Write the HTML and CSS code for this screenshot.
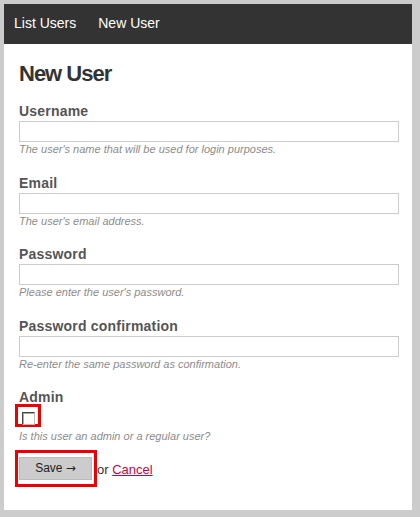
FILE: index.html
```html
<!DOCTYPE html>
<html>
<head>
<meta charset="utf-8">
<link rel="stylesheet" href="styles.css">
</head>
<body>
<div class="page">
  <nav class="nav">
    <a href="#">List Users</a>
    <a href="#">New User</a>
  </nav>
  <div class="content">
    <h2 class="title">New User</h2>
    <form class="form">
      <div class="field">
        <label class="label">Username</label>
        <input class="text" type="text">
        <span class="desc">The user's name that will be used for login purposes.</span>
      </div>
      <div class="field">
        <label class="label">Email</label>
        <input class="text" type="text">
        <span class="desc">The user's email address.</span>
      </div>
      <div class="field">
        <label class="label">Password</label>
        <input class="text" type="password">
        <span class="desc">Please enter the user's password.</span>
      </div>
      <div class="field">
        <label class="label">Password confirmation</label>
        <input class="text" type="password">
        <span class="desc">Re-enter the same password as confirmation.</span>
      </div>
      <div class="field">
        <label class="label">Admin</label>
        <div class="error-wrap check-wrap"><input class="check" type="checkbox"></div>
        <span class="desc">Is this user an admin or a regular user?</span>
      </div>
      <div class="actions">
        <div class="error-wrap btn-wrap"><button class="button" type="button">Save <span class="arrow">&rarr;</span></button></div>
        <span class="or">or <a class="cancel" href="#">Cancel</a></span>
      </div>
    </form>
  </div>
</div>
</body>
</html>
```

FILE: styles.css
```css
html, body {
  margin: 0;
  padding: 0;
}
body {
  background: #cccccc;
  font-family: "Liberation Sans", Arial, sans-serif;
  padding: 4px 8px 7px 4px;
}
.page {
  background: #ffffff;
}
.nav {
  background: #333333;
  height: 40px;
  display: flex;
  align-items: center;
  padding-left: 6px;
  gap: 14px;
}
.nav a {
  color: #ffffff;
  text-decoration: none;
  font-size: 14px;
  padding: 0 4px 2px;
}
.content {
  padding: 17px 13px 23px 15px;
}
.title {
  margin: 0;
  font-size: 22px;
  line-height: 26px;
  font-weight: bold;
  letter-spacing: -1px;
  color: #333333;
}
.form {
  margin-top: 15px;
}
.field {
  display: flex;
  flex-direction: column;
  align-items: flex-start;
  margin-bottom: 17.5px;
}
.label {
  font-size: 14px;
  line-height: 18px;
  font-weight: bold;
  color: #555555;
  letter-spacing: 0.2px;
  margin-bottom: 1px;
}
.text {
  box-sizing: border-box;
  width: 380px;
  height: 21px;
  margin: 0;
  border: 1px solid #cccccc;
  padding: 2px;
  font-size: 12px;
  outline: none;
}
.desc {
  font-size: 11px;
  line-height: 14px;
  font-style: italic;
  color: #8c8c8c;
}
.error-wrap {
  border: 3px solid #ee0000;
  box-sizing: border-box;
}
.check-wrap {
  width: 26px;
  height: 23px;
  margin: -3px 0 2px -4px;
}
.check {
  -webkit-appearance: none;
  appearance: none;
  display: block;
  box-sizing: border-box;
  width: 13px;
  height: 13px;
  margin: 5px 0 0 4px;
  background: #ffffff;
  border: 1px solid;
  border-color: #444444 #bbbbbb #bbbbbb #444444;
  box-shadow: inset 1px 1px 0 #aaaaaa;
}
.actions {
  display: flex;
  align-items: center;
  margin-top: -11px;
}
.btn-wrap {
  margin-left: -4px;
  padding: 4px 2px 4px 1px;
}
.button {
  display: block;
  width: 73px;
  height: 23px;
  background: #cccccc;
  border: 1px solid #bbbbbb;
  font-family: "Liberation Sans", Arial, sans-serif;
  font-size: 12px;
  color: #222222;
  padding: 0;
  border-radius: 0;
}
.arrow {
  font-family: "DejaVu Sans", sans-serif;
  font-size: 12px;
}
.or {
  font-size: 13px;
  color: #333333;
  padding-top: 2px;
}
.cancel {
  color: #cc0044;
}
```
